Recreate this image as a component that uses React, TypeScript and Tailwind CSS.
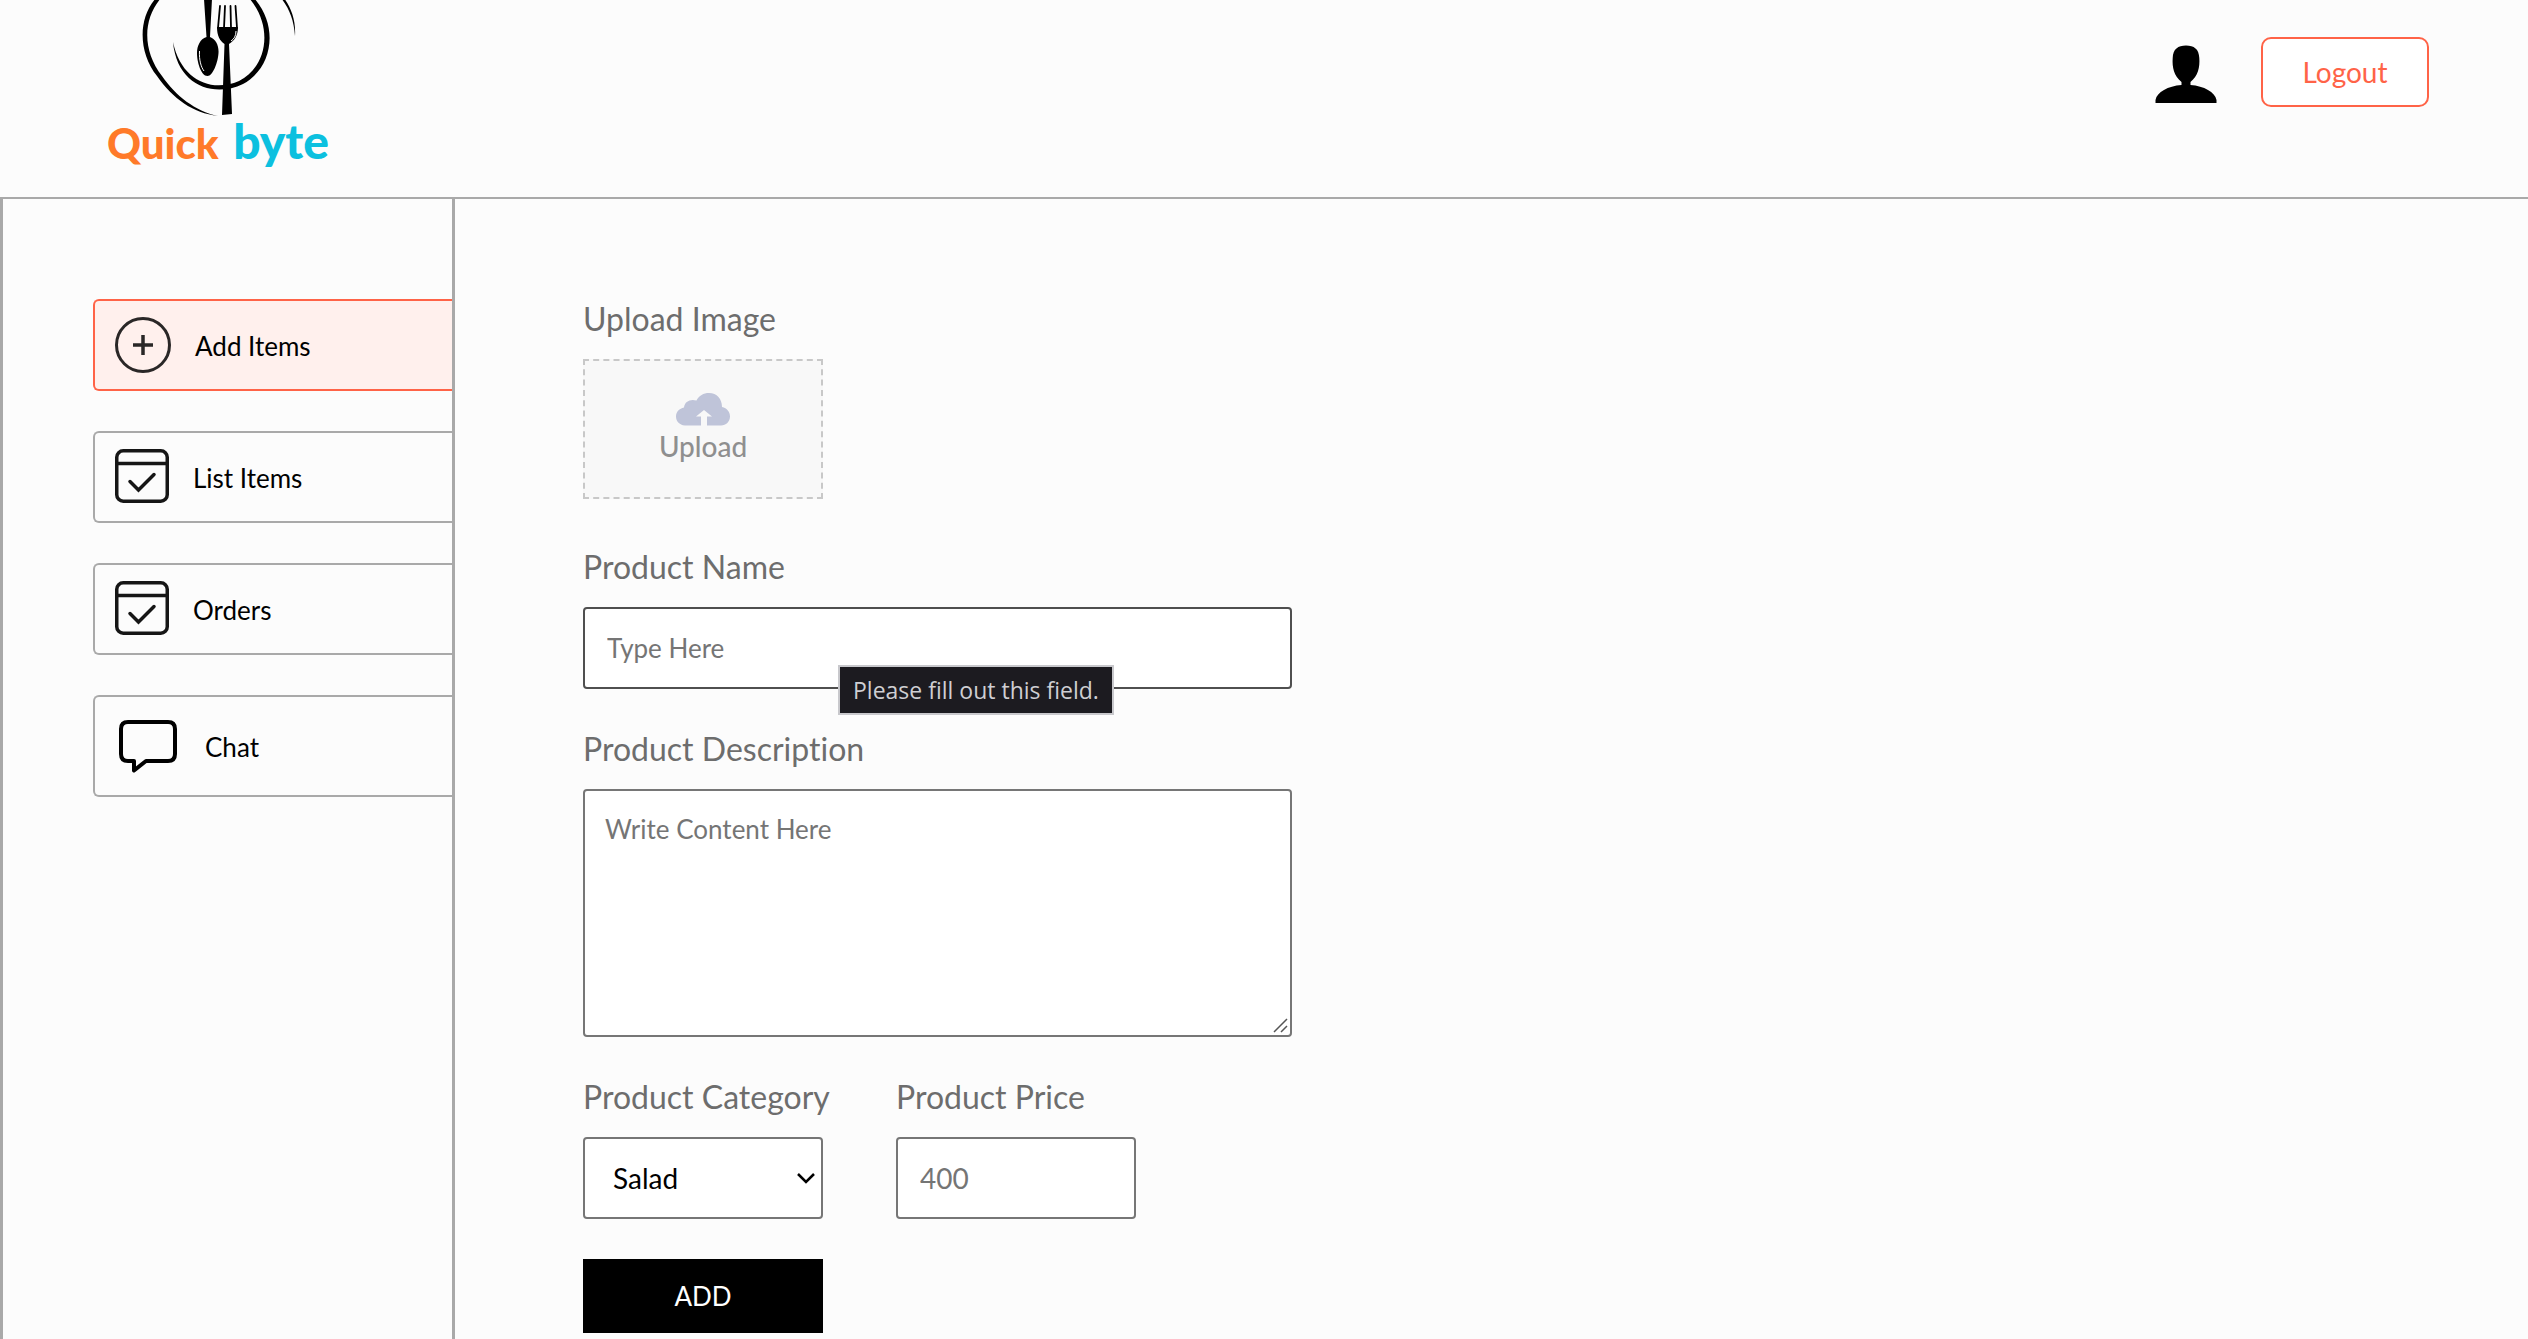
import { ReactNode } from "react";

const Logo = () => (
  <a href="#" aria-label="Quick byte" className="relative block h-[184px] w-[222px] shrink-0">
    <svg viewBox="0 0 222 184" className="absolute inset-0 h-full w-full overflow-visible" aria-hidden="true">
      {/* outer swoosh */}
      <path d="M49 -2 C31 18 31 52 50 76 C66 99 86 113 111 116 C88 111 69 96 55 76 C35 50 36 19 54 -2 Z" fill="#000" />
      <path d="M174 -2 C182 8 187 20 188 36 C189 20 184 8 177 -2 Z" fill="#000" />
      {/* plate */}
      <path d="M147 -2 C172 26 166 68 136 84 C107 98 70 86 66 42 C74 80 104 93 132 81 C160 67 167 27 142 -2 Z" fill="#000" />
      {/* spoon */}
      <path d="M97 -1 H105 L103 37 C109 39 112 46 111.500 53 C111 62 106 76 100.500 76 C94 76 90 62 90 53 C90 46 93 39 99.500 37 Z" fill="#000" />
      <path d="M92.500 51 C92 60 94 67 97 71" fill="none" stroke="#fcfcfc" strokeWidth="1" />
      {/* fork */}
      <path d="M113 6 L111 28 M118 6 L117 28 M123.500 6 L124 28 M128.500 6 L130 28" fill="none" stroke="#000" strokeWidth="1.800" strokeLinecap="round" />
      <path d="M110 27 H131 C131 36 127 41 122 44 L125 114 L115 115 L117.500 44 C113 41 110 36 110 27 Z" fill="#000" />
      <path d="M129 31 C129 36 127 39 124 41" fill="none" stroke="#fcfcfc" strokeWidth="1" />
    </svg>
    <span className="absolute inset-x-0 top-[115px] flex items-baseline justify-between leading-[52px] font-black">
      <span className="text-[42px] text-[#ff7a29]">Quick</span>
      <span className="text-5xl leading-[52px] text-[#0cc0df]">byte</span>
    </span>
  </a>
);

const Avatar = () => (
  <svg viewBox="0 -4 62 62" className="size-[62px]" role="img" aria-label="Profile">
    <path d="M31 0.500 C39 0.500 44 4 44.300 13 C45 22 43 31 35.500 37 V40 C49 41 60 47 61.500 55 V58 H0.500 V55 C2 47 13 41 26.500 40 V37 C19 31 17 22 17.700 13 C18 4 23 0.500 31 0.500 Z" fill="#000" />
  </svg>
);

const AddIcon = () => (
  <svg viewBox="0 0 56 56" className="size-14" fill="none" stroke="#2a2727" aria-hidden="true">
    <circle cx="28" cy="28" r="26.500" strokeWidth="3" />
    <path d="M28 18 V38 M18 28 H38" strokeWidth="3.500" />
  </svg>
);

const OrderIcon = () => (
  <svg viewBox="0 0 54 54" className="mb-[2px] size-[54px]" fill="none" stroke="#161616" aria-hidden="true">
    <rect x="1.750" y="1.750" width="50.500" height="50.500" rx="6.500" strokeWidth="3.500" />
    <path d="M2 14.500 H52" strokeWidth="3.500" />
    <path d="M15 32.500 L23.500 41 L39 25.500" strokeWidth="3.500" strokeLinecap="round" />
  </svg>
);

const ChatIcon = () => (
  <svg viewBox="0 0 66 66" className="size-[66px]" fill="none" stroke="#000" aria-hidden="true">
    <path d="M13 9 H53 Q60 9 60 16 V41 Q60 48 53 48 H31 L19 57.500 V48 H13 Q6 48 6 41 V16 Q6 9 13 9 Z" strokeWidth="4" strokeLinejoin="round" />
  </svg>
);

const items: { label: string; icon: ReactNode; active?: boolean }[] = [
  { label: "Add Items", icon: <AddIcon />, active: true },
  { label: "List Items", icon: <OrderIcon /> },
  { label: "Orders", icon: <OrderIcon /> },
  { label: "Chat", icon: <ChatIcon /> },
];

const field = "rounded border-2 bg-white placeholder:text-[#757575]";
const group = "flex flex-col items-start gap-5";

export default function App() {
  return (
    <div className="flex min-h-screen flex-col bg-[#fcfcfc] font-['Lato',sans-serif] text-black [font-variant-ligatures:none]">
      <header className="flex h-[197px] items-start justify-between pr-[99px] pl-[107px]">
        <Logo />
        <div className="flex items-center gap-11 pt-[37px]">
          <Avatar />
          <button type="button" className="h-[70px] w-[168px] rounded-[10px] border-2 border-[tomato] bg-white text-[28px] text-[tomato]">
            Logout
          </button>
        </div>
      </header>
      <hr className="border-t-2 border-[#a9a9a9]" />
      <div className="flex flex-1">
        <nav className="w-[18%] shrink-0 border-r-[3px] border-l-[3px] border-[#a9a9a9] pt-[100px] pl-[90px]">
          <ul className="flex flex-col gap-10">
            {items.map((item) => (
              <li key={item.label}>
                <a
                  href="#"
                  className={
                    "flex min-h-[92px] items-center gap-6 rounded-l-md border-2 border-r-0 px-5 py-4 text-[26px] leading-8 " +
                    (item.active ? "border-[tomato] bg-[#fff0ed]" : "border-[#a9a9a9]")
                  }
                >
                  {item.icon}
                  <span className="pt-[2px]">{item.label}</span>
                </a>
              </li>
            ))}
          </ul>
        </nav>
        <main className="flex-1 pt-[100px] pl-32">
          <form className="flex max-w-[709px] flex-col gap-10 text-[32px] leading-10 text-[#6d6d6d]" noValidate>
            <div className={group + " mb-2"}>
              <p>Upload Image</p>
              <label
                htmlFor="image"
                className="flex h-[140px] w-60 cursor-pointer flex-col items-center border-2 border-dashed border-[#c8c8c8] bg-[#f8f8f8] pt-8 text-[28px] leading-10 font-medium text-[#8f8f8f]"
              >
                <svg viewBox="0 0 54 33" className="h-[33px] w-[54px]" aria-hidden="true">
                  <path d="M9 32.500 C3 32 0 28 0 23.500 C0 18.500 3.500 15.500 8 14.500 C8.500 8.500 14.500 5.500 20.500 7.500 C23 2.500 27.500 0 33 0 C41 0 46 6 46 14 C51 15 54 19 54 23.500 C54 28.500 50 32.500 45 32.500 H31 V23.500 H36 L28 17 L20 23.500 H25 V32.500 Z" fill="#bfc4d9" />
                </svg>
                Upload
              </label>
              <input id="image" type="file" className="sr-only" />
            </div>
            <div className={group + " relative"}>
              <label htmlFor="name">Product Name</label>
              <input id="name" type="text" placeholder="Type Here" className={field + " h-[82px] w-full border-[#4f4f4f] px-[22px] text-[26px]"} />
              <div role="tooltip" className="absolute top-[118px] left-[255px] border-2 border-[#c8c8cc] bg-[#1c1b20] px-[13px] font-['Open_Sans',sans-serif] text-[23px] leading-[46px] whitespace-nowrap text-[#cfcfd3]">
                Please fill out this field.
              </div>
            </div>
            <div className={group}>
              <label htmlFor="description">Product Description</label>
              <div className="relative w-full">
                <textarea id="description" placeholder="Write Content Here" className={field + " block h-[248px] w-full resize-none border-[#767676] px-5 py-[18px] text-[26px]"} />
                <svg viewBox="0 0 16 16" className="pointer-events-none absolute right-[3px] bottom-[3px] size-4" fill="none" stroke="#555" strokeWidth="1.500" aria-hidden="true">
                  <path d="M1 14 L14 1 M8 14 L14 8" />
                </svg>
              </div>
            </div>
            <div className="flex gap-[60px]">
              <div className={group + " min-w-[253px]"}>
                <label htmlFor="category">Product Category</label>
                <div className="relative">
                  <select id="category" className={field + " block h-[82px] w-60 appearance-none border-[#767676] px-7 text-[28px] text-black"}>
                    <option>Salad</option>
                  </select>
                  <svg viewBox="0 0 18 11" className="pointer-events-none absolute top-9 right-2 h-[11px] w-[18px]" fill="none" stroke="#000" strokeWidth="2.500" aria-hidden="true">
                    <path d="M1 1 L9 9 L17 1" />
                  </svg>
                </div>
              </div>
              <div className={group}>
                <label htmlFor="price">Product Price</label>
                <input id="price" type="text" inputMode="numeric" placeholder="400" className={field + " h-[82px] w-60 border-[#767676] px-[22px] text-[28px]"} />
              </div>
            </div>
            <button type="submit" className="h-[74px] w-60 bg-black text-[26px] text-white">
              ADD
            </button>
          </form>
        </main>
      </div>
    </div>
  );
}
